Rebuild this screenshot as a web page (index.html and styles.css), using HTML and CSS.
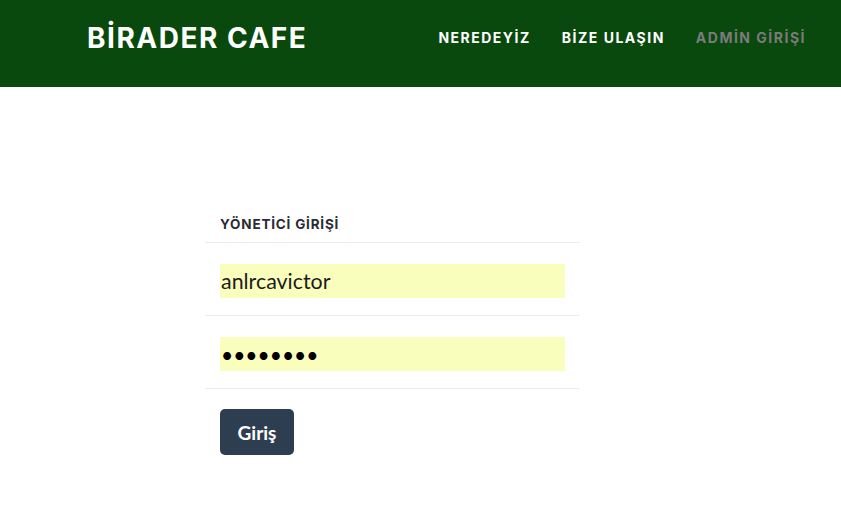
FILE: index.html
```html
<!DOCTYPE html>
<html lang="tr">
<head>
<meta charset="utf-8">
<title>Birader Cafe - Admin Girişi</title>
<link rel="stylesheet" href="styles.css">
</head>
<body>
<nav class="navbar">
  <a class="brand" href="#">BİRADER CAFE</a>
  <ul class="nav">
    <li><a href="#">NEREDEYİZ</a></li>
    <li><a href="#">BİZE ULAŞIN</a></li>
    <li><a class="active" href="#">ADMİN GİRİŞİ</a></li>
  </ul>
</nav>
<main class="page">
  <form class="card">
    <div class="card-header">YÖNETİCİ GİRİŞİ</div>
    <div class="row"><input class="field" type="text" value="anlrcavictor"></div>
    <div class="row"><input class="field pass" type="password" value="12345678"></div>
    <div class="row last"><button class="btn" type="button">Giriş</button></div>
  </form>
</main>
</body>
</html>
```
FILE: styles.css
```css
* { box-sizing: border-box; }
html, body { margin: 0; padding: 0; background: #fff; }
body { font-family: Lato, "Noto Sans", sans-serif; color: #212529; }

.navbar {
  height: 87px;
  background: #09490d;
  display: flex;
  align-items: center;
  padding: 0 35px 0 87px;
  justify-content: space-between;
}
.brand {
  font-family: Inter, "Open Sans", sans-serif;
  font-weight: 700;
  font-size: 28px;
  color: #fff;
  text-decoration: none;
  letter-spacing: 1.5px;
  margin-top: -12px;
}
.nav {
  list-style: none;
  display: flex;
  gap: 31px;
  margin: 0;
  padding: 0;
  margin-top: -14px;
}
.nav a {
  font-family: Inter, "Open Sans", sans-serif;
  font-weight: 700;
  font-size: 14px;
  letter-spacing: 1.5px;
  color: #fff;
  text-decoration: none;
}
.nav a.active { color: #7b7b7b; }

.page { padding-top: 118px; }
.card {
  width: 375px;
  margin-left: 205px;
}
.card-header {
  font-family: Inter, "Open Sans", sans-serif;
  font-weight: 700;
  font-size: 13.5px;
  color: #2b2b33;
  padding: 11px 15px 10px;
  line-height: 16px;
  letter-spacing: 0.8px;
  border-bottom: 1px solid #ebebeb;
}
.row {
  padding: 21px 15px 17px;
  border-bottom: 1px solid #ebebeb;
  display: flex;
}
.row.last { border-bottom: none; padding-top: 20px; }
.field {
  width: 345px;
  height: 34px;
  border: none;
  background: #fafebd;
  font-family: Lato, sans-serif;
  font-size: 21.4px;
  color: #1b1b1b;
  padding: 0 0 0 1px;
  outline: none;
}
.field.pass { letter-spacing: 0; color: #000; font-size: 21px; }
.btn {
  width: 74px;
  height: 46px;
  background: #2c3e50;
  color: #fff;
  border: none;
  border-radius: 5px;
  font-family: Lato, sans-serif;
  font-weight: 700;
  font-size: 19px;
  padding: 0;
}
```
